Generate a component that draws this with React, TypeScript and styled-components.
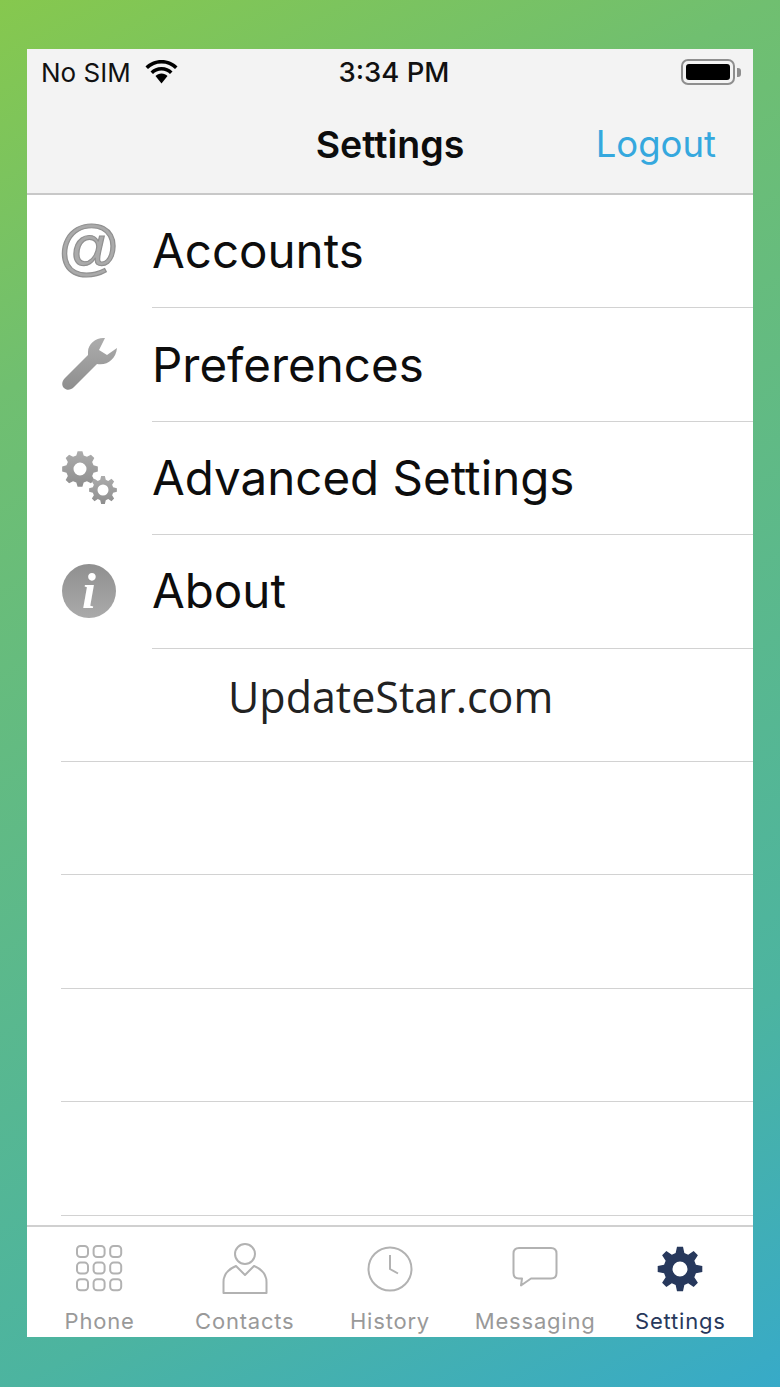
import styled, { createGlobalStyle } from "styled-components";

const GlobalStyle = createGlobalStyle`
  html, body {
    margin: 0;
    padding: 0;
  }
  * {
    box-sizing: border-box;
  }
`;

// builds a cog outline with a round hole, used for the settings icons
function gearPath(cx: number, cy: number, outer: number, root: number, hole: number, teeth: number) {
  const step = (Math.PI * 2) / teeth;
  const pts: string[] = [];
  for (let i = 0; i < teeth; i++) {
    const a = i * step - Math.PI / 2;
    const corners: [number, number][] = [
      [root, a - step * 0.34],
      [outer, a - step * 0.17],
      [outer, a + step * 0.17],
      [root, a + step * 0.34],
    ];
    corners.forEach(([r, t]) => {
      pts.push(`${(cx + r * Math.cos(t)).toFixed(2)} ${(cy + r * Math.sin(t)).toFixed(2)}`);
    });
  }
  const ring = `M${cx - hole} ${cy}a${hole} ${hole} 0 1 0 ${hole * 2} 0a${hole} ${hole} 0 1 0 ${-hole * 2} 0Z`;
  return `M${pts.join("L")}Z${ring}`;
}

const IconShade = ({ id }: { id: string }) => (
  <defs>
    <linearGradient id={id} x1="0" y1="0" x2="0" y2="1">
      <stop offset="0" stopColor="#acacac" />
      <stop offset="1" stopColor="#8e8e8e" />
    </linearGradient>
  </defs>
);

const WrenchIcon = () => (
  <svg width="56" height="54" viewBox="0 0 56 54">
    <IconShade id="wrench" />
    <path
      fill="url(#wrench)"
      d="M44 1C36 0 27 6 27 15L27 18L4 41C0 45 1 49 3 51C6 54 10 53 13 50L36 27C46 29 55 22 56 11L46 18L38 13Z"
    />
  </svg>
);

const GearsIcon = () => (
  <svg width="56" height="54" viewBox="0 0 56 54">
    <IconShade id="gears" />
    <path fill="url(#gears)" d={gearPath(19, 19, 18, 14, 6.5, 8)} />
    <path fill="url(#gears)" d={gearPath(42, 40, 14, 10.5, 5.5, 8)} />
  </svg>
);

const DialIcon = () => (
  <svg width="50" height="50" viewBox="0 0 50 50" fill="none" stroke="#b2b2b2" strokeWidth="2">
    {[0, 1, 2].map((r) =>
      [0, 1, 2].map((c) => <rect key={`${r}-${c}`} x={2 + c * 16.6} y={2 + r * 16.6} width="11" height="11" rx="3.5" />),
    )}
  </svg>
);

const ContactIcon = () => (
  <svg width="50" height="54" viewBox="0 0 50 54" fill="none" stroke="#b2b2b2" strokeWidth="2">
    <circle cx="25" cy="12" r="10" />
    <path d="M3.5 51V40C3.5 31 9 27 16 24L25 33L34 24C41 27 46.5 31 46.5 40V51Z" strokeLinejoin="round" />
  </svg>
);

const ClockIcon = () => (
  <svg width="50" height="50" viewBox="0 0 50 50" fill="none" stroke="#b2b2b2" strokeWidth="2">
    <circle cx="25" cy="25" r="21.5" />
    <path d="M25 11V25L33 29.5" />
  </svg>
);

const BubbleIcon = () => (
  <svg width="50" height="50" viewBox="0 0 50 50" fill="none" stroke="#b2b2b2" strokeWidth="2">
    <path
      strokeLinejoin="round"
      d="M9 4H41C44.5 4 46.5 6 46.5 9.5V29C46.5 32.5 44.5 34.500 41 34.500H21L11 41.500L12 34.500H9C5.500 34.500 3.500 32.500 3.500 29V9.500C3.500 6 5.500 4 9 4Z"
    />
  </svg>
);

const CogIcon = () => (
  <svg width="50" height="50" viewBox="0 0 50 50">
    <path fill="#27385c" d={gearPath(25, 25, 22.5, 16.5, 7.5, 8)} />
  </svg>
);

const WifiIcon = () => (
  <svg width="33" height="24" viewBox="0 0 33 24">
    <path
      fill="#000"
      d="M16.500 0C10 0 4.500 2.500 0.500 6.500L3 9C6.500 5.500 11 3.500 16.500 3.500S26.500 5.500 30 9L32.500 6.500C28.500 2.500 23 0 16.500 0Z"
    />
    <path
      fill="#000"
      d="M16.500 7C12 7 8.500 8.700 5.500 11.500L8 14C10.200 12 13 10.500 16.500 10.500S22.800 12 25 14L27.500 11.500C24.500 8.700 21 7 16.500 7Z"
    />
    <path fill="#000" d="M16.500 13.500C14 13.500 12 14.500 10.500 16L16.500 23.500L22.500 16C21 14.500 19 13.500 16.500 13.500Z" />
  </svg>
);

type Tab = { label: string; icon: React.ReactNode; active?: boolean };

const tabs: Tab[] = [
  { label: "Phone", icon: <DialIcon /> },
  { label: "Contacts", icon: <ContactIcon /> },
  { label: "History", icon: <ClockIcon /> },
  { label: "Messaging", icon: <BubbleIcon /> },
  { label: "Settings", icon: <CogIcon />, active: true },
];

export default function App() {
  return (
    <Page>
      <GlobalStyle />
      <Phone>
        <TopBar>
          <StatusRow>
            <Carrier>
              No SIM
              <WifiIcon />
            </Carrier>
            <Clock>3:34 PM</Clock>
            <BatteryWrap>
              <Battery>
                <BatteryFill />
              </Battery>
              <BatteryCap />
            </BatteryWrap>
          </StatusRow>
          <NavRow>
            <span />
            <NavTitle>Settings</NavTitle>
            <Logout>Logout</Logout>
          </NavRow>
        </TopBar>

        <List>
          <Row>
            <RowIcon>
              <AtGlyph>@</AtGlyph>
            </RowIcon>
            <RowBody>Accounts</RowBody>
          </Row>
          <Row>
            <RowIcon>
              <WrenchIcon />
            </RowIcon>
            <RowBody>Preferences</RowBody>
          </Row>
          <Row>
            <RowIcon>
              <GearsIcon />
            </RowIcon>
            <RowBody>Advanced Settings</RowBody>
          </Row>
          <Row>
            <RowIcon>
              <InfoBadge>i</InfoBadge>
            </RowIcon>
            <RowBody>About</RowBody>
          </Row>
          <BlankRow>UpdateStar.com</BlankRow>
          <BlankRow />
          <BlankRow />
          <BlankRow />
          <BlankRow />
        </List>

        <TabBar>
          {tabs.map((t) => (
            <TabItem key={t.label} $active={t.active}>
              <TabIcon>{t.icon}</TabIcon>
              {t.label}
            </TabItem>
          ))}
        </TabBar>
      </Phone>
    </Page>
  );
}

const Page = styled.div`
  width: 780px;
  height: 1387px;
  padding: 49px 27px 50px;
  background: linear-gradient(153deg, #86c84e 0%, #70bf70 22%, #4cb4a0 78%, #37aac8 100%);
  font-family: Inter, "Liberation Sans", sans-serif;
`;

const Phone = styled.div`
  height: 100%;
  display: flex;
  flex-direction: column;
  background: #fff;
`;

const TopBar = styled.header`
  height: 146px;
  background: #f3f3f3;
  border-bottom: 2px solid #c8c8c8;
`;

const StatusRow = styled.div`
  height: 46px;
  display: grid;
  grid-template-columns: 1fr auto 1fr;
  align-items: center;
  padding: 0 12px 0 14px;
  color: #111;
`;

const Carrier = styled.div`
  display: flex;
  align-items: center;
  gap: 14px;
  font-size: 26px;
`;

const Clock = styled.div`
  font-size: 27.5px;
  font-weight: 500;
  padding-left: 6px;
`;

const BatteryWrap = styled.div`
  display: flex;
  align-items: center;
  justify-content: flex-end;
  gap: 2px;
`;

const Battery = styled.div`
  width: 54px;
  height: 26px;
  padding: 3px;
  border: 2px solid #8e8e8e;
  border-radius: 7px;
`;

const BatteryFill = styled.div`
  height: 100%;
  background: #000;
  border-radius: 3px;
`;

const BatteryCap = styled.div`
  width: 4px;
  height: 9px;
  background: #8e8e8e;
  border-radius: 0 3px 3px 0;
`;

const NavRow = styled.div`
  height: 98px;
  display: grid;
  grid-template-columns: 1fr auto 1fr;
  align-items: center;
  padding: 0 37px;
`;

const NavTitle = styled.div`
  font-size: 37.5px;
  font-weight: 600;
  color: #0c0c0c;
`;

const Logout = styled.div`
  justify-self: end;
  font-size: 36.5px;
  color: #35a8de;
`;

const List = styled.div`
  flex: 1;
  min-height: 0;
  overflow: hidden;
`;

const Row = styled.div`
  height: 113.4px;
  display: flex;
  padding-left: 34px;
`;

const BlankRow = styled.div`
  height: 113.4px;
  margin-left: 34px;
  padding: 0 0 16px 167px;
  display: flex;
  align-items: center;
  border-bottom: 1.5px solid #d2d2d2;
  font-family: "Open Sans", sans-serif;
  font-size: 43px;
  color: #222;
`;

const RowIcon = styled.div`
  flex: none;
  width: 56px;
  margin-right: 35px;
  display: flex;
  align-items: center;
  justify-content: center;
  padding-bottom: 2px;
`;

const RowBody = styled.div`
  flex: 1;
  display: flex;
  align-items: center;
  padding-bottom: 1px;
  border-bottom: 1.5px solid #d2d2d2;
  font-size: 47.5px;
  color: #0d0d0d;
`;

const AtGlyph = styled.span`
  font-family: "Liberation Sans", sans-serif;
  font-size: 62px;
  line-height: 64px;
  padding-bottom: 8px;
  color: #aaa;
  -webkit-text-stroke: 1.2px #909090;
`;

const InfoBadge = styled.div`
  width: 54px;
  height: 54px;
  display: flex;
  align-items: center;
  justify-content: center;
  border-radius: 50%;
  background: linear-gradient(#8f8f8f, #aaaaaa);
  font-family: "Liberation Serif", serif;
  font-size: 50px;
  font-style: italic;
  font-weight: 700;
  color: #fff;
`;

const TabBar = styled.nav`
  flex: none;
  height: 112px;
  display: grid;
  grid-template-columns: repeat(5, 1fr);
  border-top: 2px solid #d0d0d0;
  background: #fff;
`;

const TabItem = styled.div<{ $active?: boolean }>`
  display: flex;
  flex-direction: column;
  align-items: center;
  font-size: 22px;
  letter-spacing: 0.8px;
  color: ${(p) => (p.$active ? "#27385c" : "#999")};
`;

const TabIcon = styled.div`
  height: 81px;
  display: flex;
  align-items: center;
  justify-content: center;
  padding-top: 8px;
  padding-bottom: 6px;
`;
